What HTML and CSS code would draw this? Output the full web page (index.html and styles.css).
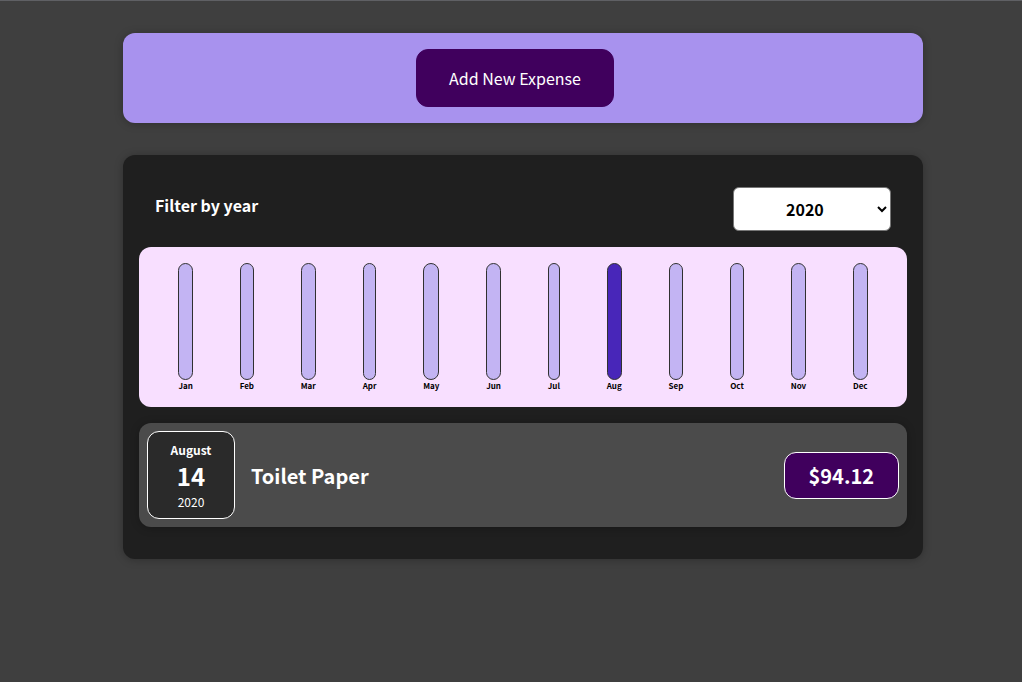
FILE: index.html
```html
<!DOCTYPE html>
<html lang="en">
<head>
<meta charset="utf-8">
<meta name="viewport" content="width=device-width, initial-scale=1">
<title>Expenses</title>
<link rel="stylesheet" href="styles.css">
</head>
<body>
<main class="page">
  <section class="new-expense">
    <button class="new-expense__button" type="button">Add New Expense</button>
  </section>
  <section class="expenses">
    <div class="filter">
      <label class="filter__label" for="year">Filter by year</label>
      <select class="filter__select" id="year">
        <option>2022</option>
        <option>2021</option>
        <option selected>2020</option>
        <option>2019</option>
      </select>
    </div>
    <div class="chart">
      <div class="chart__month"><div class="chart__bar"></div><div class="chart__label">Jan</div></div>
      <div class="chart__month"><div class="chart__bar"></div><div class="chart__label">Feb</div></div>
      <div class="chart__month"><div class="chart__bar"></div><div class="chart__label">Mar</div></div>
      <div class="chart__month"><div class="chart__bar"></div><div class="chart__label">Apr</div></div>
      <div class="chart__month"><div class="chart__bar"></div><div class="chart__label">May</div></div>
      <div class="chart__month"><div class="chart__bar"></div><div class="chart__label">Jun</div></div>
      <div class="chart__month"><div class="chart__bar"></div><div class="chart__label">Jul</div></div>
      <div class="chart__month"><div class="chart__bar chart__bar--full"></div><div class="chart__label">Aug</div></div>
      <div class="chart__month"><div class="chart__bar"></div><div class="chart__label">Sep</div></div>
      <div class="chart__month"><div class="chart__bar"></div><div class="chart__label">Oct</div></div>
      <div class="chart__month"><div class="chart__bar"></div><div class="chart__label">Nov</div></div>
      <div class="chart__month"><div class="chart__bar"></div><div class="chart__label">Dec</div></div>
    </div>
    <ul class="list">
      <li class="item">
        <time class="date" datetime="2020-08-14">
          <span class="date__month">August</span>
          <span class="date__day">14</span>
          <span class="date__year">2020</span>
        </time>
        <h2 class="item__title">Toilet Paper</h2>
        <div class="item__price">$94.12</div>
      </li>
    </ul>
  </section>
</main>
</body>
</html>
```

FILE: styles.css
```css
* {
  box-sizing: border-box;
}

body {
  margin: 0;
  min-height: 100vh;
  border-top: 1px solid #5f6064;
  background: #3f3f3f;
  color: #fff;
  font-family: "Noto Sans CJK JP", sans-serif;
}

.page {
  display: flex;
  flex-direction: column;
  align-items: center;
  gap: 32px;
  padding: 32px 0 32px 24px;
}

.new-expense,
.expenses {
  width: 95%;
  max-width: 800px;
  border-radius: 12px;
  padding: 16px;
  box-shadow: 0 1px 8px rgba(0, 0, 0, 0.25);
}

.new-expense {
  background: #a892ee;
  text-align: center;
}

.new-expense__button {
  margin-right: 16px;
  padding: 16px 32px;
  border: 1px solid #40005d;
  border-radius: 12px;
  background: #40005d;
  color: #fff;
  font: inherit;
  font-size: 16px;
  font-weight: 400;
  line-height: 24px;
  vertical-align: top;
}

.expenses {
  background: #1f1f1f;
  padding-bottom: 32px;
}

.filter {
  display: flex;
  align-items: center;
  justify-content: space-between;
  padding: 16px;
}

.filter__label {
  padding-bottom: 8px;
  font-size: 16px;
  font-weight: 700;
  line-height: 24px;
}

.filter__select {
  width: 158px;
  height: 44px;
  padding: 0 0 0 48px;
  border: 1px solid #767676;
  border-radius: 6px;
  background: #fff;
  color: #000;
  font: inherit;
  font-weight: 700;
}

.chart {
  display: flex;
  justify-content: space-around;
  height: 160px;
  padding: 16px;
  border-radius: 12px;
  background: #f8dfff;
}

.chart__month {
  display: flex;
  flex-direction: column;
}

.chart__bar {
  flex: 1;
  border: 1px solid #313131;
  border-radius: 12px;
  background: #c3b4f3;
}

.chart__bar--full {
  background: #4826b9;
}

.chart__label {
  color: #000;
  font-size: 8px;
  font-weight: 700;
  line-height: 11px;
}

.list {
  margin: 16px 0 0;
  padding: 0;
  list-style: none;
}

.item {
  display: flex;
  align-items: center;
  gap: 16px;
  padding: 8px;
  border-radius: 12px;
  background: #4b4b4b;
  box-shadow: 0 1px 8px rgba(0, 0, 0, 0.25);
}

.date {
  display: flex;
  flex-direction: column;
  align-items: center;
  justify-content: center;
  width: 88px;
  height: 88px;
  padding-top: 2px;
  border: 1px solid #fff;
  border-radius: 12px;
  background: #2a2a2a;
}

.date__month {
  font-size: 12px;
  font-weight: 700;
  line-height: 18px;
}

.date__day {
  font-size: 24px;
  font-weight: 700;
  line-height: 34px;
}

.date__year {
  font-size: 12px;
  font-weight: 400;
  line-height: 18px;
}

.item__title {
  flex: 1;
  margin: 0;
  font-size: 20px;
  font-weight: 700;
  line-height: 29px;
}

.item__price {
  padding: 8px 24px;
  border: 1px solid #fff;
  border-radius: 12px;
  background: #40005d;
  font-size: 20px;
  font-weight: 700;
  line-height: 29px;
}
```
